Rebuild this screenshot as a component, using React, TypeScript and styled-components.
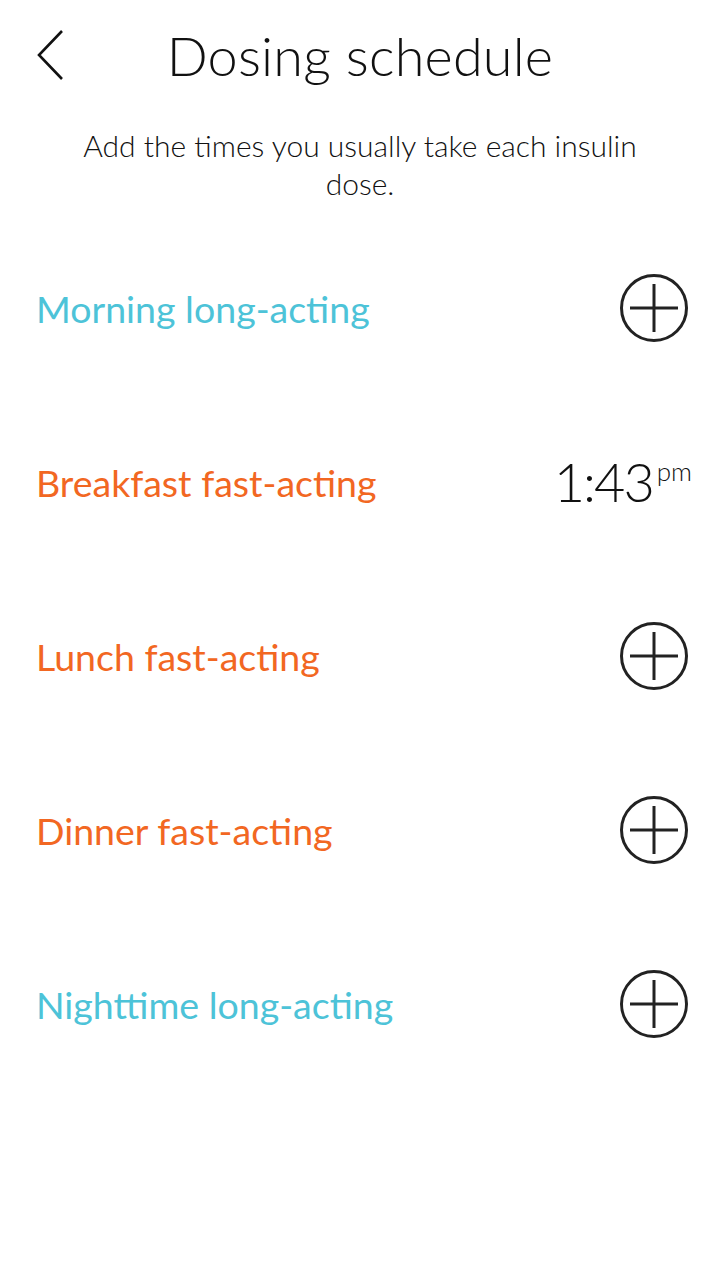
import React from "react";
import styled, { createGlobalStyle } from "styled-components";

const Global = createGlobalStyle`
  html, body { margin: 0; padding: 0; background: #fff; }
  body { font-family: "Lato", "Noto Sans", sans-serif; color: #111; }
`;

const Page = styled.div`
  width: 720px;
  min-height: 1280px;
  display: flex;
  flex-direction: column;
`;

const Header = styled.header`
  height: 110px;
  display: flex;
  align-items: center;
  justify-content: center;
  position: relative;
`;

const Back = styled.button`
  position: absolute;
  left: 30px;
  top: 26px;
  width: 40px;
  height: 58px;
  border: 0;
  background: none;
  padding: 0;
  display: flex;
  align-items: center;
  justify-content: center;
`;

const Title = styled.h1`
  margin: 0;
  font-size: 54px;
  font-weight: 300;
  letter-spacing: 0.2px;
  color: #111;
`;

const Subtitle = styled.p`
  margin: 16px auto 0;
  width: 590px;
  text-align: center;
  font-size: 30px;
  line-height: 38px;
  font-weight: 300;
  color: #111;
`;

const List = styled.div`
  margin-top: 19px;
  display: flex;
  flex-direction: column;
`;

const Row = styled.div`
  height: 174px;
  display: flex;
  align-items: center;
  justify-content: space-between;
  padding: 0 31px 0 36px;
`;

const Label = styled.span<{ $kind: "long" | "fast" }>`
  font-size: 37.5px;
  font-weight: 400;
  color: ${(p) => (p.$kind === "long" ? "#4dc3d8" : "#f26722")};
`;

const AddButton = styled.button`
  width: 70px;
  height: 70px;
  border: 0;
  padding: 0;
  background: none;
  display: flex;
  align-items: center;
  justify-content: center;
`;

const Time = styled.span`
  display: flex;
  align-items: flex-start;
  font-weight: 300;
  color: #111;
  margin-right: -3px;
`;

const TimeMain = styled.span`
  font-size: 54px;
  line-height: 56px;
  letter-spacing: -2px;
`;

const TimeSuffix = styled.span`
  font-size: 26px;
  line-height: 26px;
  margin-left: 4px;
  margin-top: 4px;
`;

const PlusIcon = () => (
  <svg width="70" height="70" viewBox="0 0 70 70">
    <circle cx="35" cy="35" r="32.5" fill="none" stroke="#222" strokeWidth="3" />
    <line x1="35" y1="11" x2="35" y2="59" stroke="#222" strokeWidth="3" />
    <line x1="11" y1="35" x2="59" y2="35" stroke="#222" strokeWidth="3" />
  </svg>
);

const rows: { label: string; kind: "long" | "fast"; time?: string }[] = [
  { label: "Morning long-acting", kind: "long" },
  { label: "Breakfast fast-acting", kind: "fast", time: "1:43" },
  { label: "Lunch fast-acting", kind: "fast" },
  { label: "Dinner fast-acting", kind: "fast" },
  { label: "Nighttime long-acting", kind: "long" },
];

export default function App() {
  return (
    <>
      <Global />
      <Page>
        <Header>
          <Back aria-label="Back">
            <svg width="30" height="52" viewBox="0 0 30 52">
              <polyline points="27,2 4,26 27,50" fill="none" stroke="#111" strokeWidth="2.6" />
            </svg>
          </Back>
          <Title>Dosing schedule</Title>
        </Header>
        <Subtitle>Add the times you usually take each insulin dose.</Subtitle>
        <List>
          {rows.map((r) => (
            <Row key={r.label}>
              <Label $kind={r.kind}>{r.label}</Label>
              {r.time ? (
                <Time>
                  <TimeMain>{r.time}</TimeMain>
                  <TimeSuffix>pm</TimeSuffix>
                </Time>
              ) : (
                <AddButton aria-label={`Add ${r.label}`}>
                  <PlusIcon />
                </AddButton>
              )}
            </Row>
          ))}
        </List>
      </Page>
    </>
  );
}
